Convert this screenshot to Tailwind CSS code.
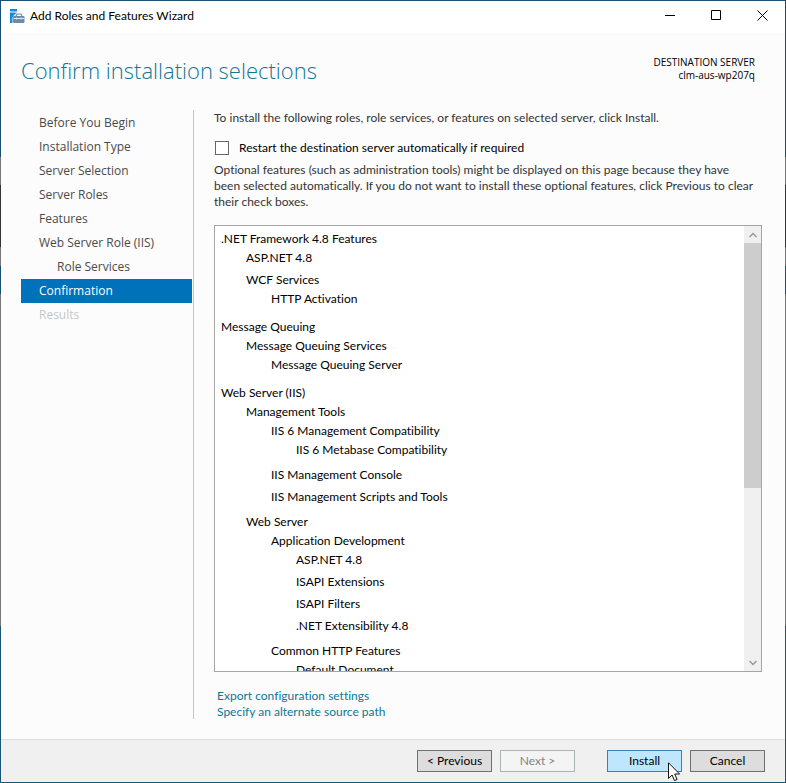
<!DOCTYPE html>
<html lang="en">
<head>
<meta charset="utf-8">
<meta name="viewport" content="width=device-width, initial-scale=1">
<title>Add Roles and Features Wizard</title>
<script src="https://cdn.jsdelivr.net/npm/@tailwindcss/browser@4"></script>
</head>
<body class="h-screen bg-[linear-gradient(#1b4f72_20%,#777_20%_23.6%,#333_23.6%_31.5%,#777_31.5%_34%,#1b4f72_34%_37.6%,#777_37.6%_80%,#1b5672_80%)] p-px font-['Lato','Open_Sans',sans-serif] text-[12px] leading-4 text-black [font-variant-ligatures:none]">
<div class="flex h-full flex-col bg-[#fcfcfc]">
  <header class="flex h-8 shrink-0 items-center bg-white pl-2">
    <svg class="mr-[3px] size-[18px]" viewBox="0 0 18 18" aria-hidden="true">
      <path d="M1 1h7v2.500H1zM1 4.500h7L5 7 3.500 9.500V15H1z" fill="#1e88d8"/>
      <path d="M7 8l1-2h4l1 2" fill="none" stroke="#6f8ba3" stroke-width="1.2"/>
      <rect x="4" y="8" width="11.500" height="7" rx="1" fill="#6f8ba3"/>
      <path d="M4.500 10.500h10.500" stroke="#dfe8f0" stroke-width="1"/>
      <path d="M7.500 9.500v2M12 9.500v2" stroke="#dfe8f0" stroke-width="1"/>
    </svg>
    <span class="grow pb-[2px]">Add Roles and Features Wizard</span>
    <button class="grid h-8 w-[46px] place-items-center pb-1" aria-label="Minimize"><svg class="size-[11px]" viewBox="0 0 11 11"><path d="M0 5.500h10" stroke="#000"/></svg></button>
    <button class="grid h-8 w-[46px] place-items-center pb-1" aria-label="Maximize"><svg class="size-[11px]" viewBox="0 0 11 11"><path d="M.5.5h9v9h-9z" fill="none" stroke="#000"/></svg></button>
    <button class="grid h-8 w-[46px] place-items-center pb-1" aria-label="Close"><svg class="size-[11px]" viewBox="0 0 11 11"><path d="M.5.5l10 10M10.500.5l-10 10" stroke="#000"/></svg></button>
  </header>
  <div class="flex h-[77px] shrink-0 justify-between pr-[30px] pl-5 font-['Open_Sans','Noto_Sans',sans-serif]">
    <h1 class="pt-[19px] text-[22px] leading-9 font-light text-[#117695]">Confirm installation selections</h1>
    <div class="pt-[23px] text-right text-[10px] leading-[13px]"><div>DESTINATION SERVER</div><div>clm-aus-wp207q</div></div>
  </div>
  <div class="flex min-h-0 grow pr-[23px] pb-5 pl-5">
    <nav class="flex w-[173px] shrink-0 flex-col border-r border-[#c5c5c5] pt-px pr-px font-['Open_Sans','Noto_Sans',sans-serif] leading-6 text-[#4a4a4a]">
      <a class="pl-[18px]" href="#">Before You Begin</a>
      <a class="pl-[18px]" href="#">Installation Type</a>
      <a class="pl-[18px]" href="#">Server Selection</a>
      <a class="pl-[18px]" href="#">Server Roles</a>
      <a class="pl-[18px]" href="#">Features</a>
      <a class="pl-[18px]" href="#">Web Server Role (IIS)</a>
      <a class="pl-9" href="#">Role Services</a>
      <a class="bg-[#0072bc] pl-[18px] text-white" href="#" aria-current="step">Confirmation</a>
      <a class="pl-[18px] text-[#c6c6c6]" aria-disabled="true">Results</a>
    </nav>
    <main class="flex min-w-0 grow flex-col pl-5 text-[#333]">
      <p>To install the following roles, role services, or features on selected server, click Install.</p>
      <label class="mt-[14px] flex items-center text-black"><input type="checkbox" class="mr-[10px] ml-px size-[14px] appearance-none border border-[#666] bg-white">Restart the destination server automatically if required</label>
      <p class="mt-[6px] pr-1">Optional features (such as administration tools) might be displayed on this page because they have been selected automatically. If you do not want to install these optional features, click Previous to clear their check boxes.</p>
      <div class="mt-[15px] flex min-h-0 grow border border-[#a5a5a5] bg-white text-black">
        <ul class="grow overflow-hidden pt-[3px] pl-[6px] leading-[19px] [&_li]:pb-[3px] [&_ul]:pl-[25px]">
          <li>.NET Framework 4.8 Features
            <ul><li>ASP.NET 4.8</li><li>WCF Services<ul><li>HTTP Activation</li></ul></li></ul></li>
          <li>Message Queuing
            <ul><li>Message Queuing Services<ul><li>Message Queuing Server</li></ul></li></ul></li>
          <li>Web Server (IIS)
            <ul>
              <li>Management Tools
                <ul><li>IIS 6 Management Compatibility<ul><li>IIS 6 Metabase Compatibility</li></ul></li><li>IIS Management Console</li><li>IIS Management Scripts and Tools</li></ul></li>
              <li>Web Server
                <ul><li>Application Development<ul><li>ASP.NET 4.8</li><li>ISAPI Extensions</li><li>ISAPI Filters</li><li>.NET Extensibility 4.8</li></ul></li><li>Common HTTP Features<ul><li>Default Document</li></ul></li></ul></li>
            </ul></li>
        </ul>
        <div class="flex w-[17px] shrink-0 flex-col bg-[#f0f0f0]">
          <button class="grid h-[17px] place-items-center" aria-label="Scroll up"><svg class="size-2" viewBox="0 0 8 8"><path d="M.5 6L4 2.500 7.500 6" fill="none" stroke="#999" stroke-width="1.500"/></svg></button>
          <div class="flex grow flex-col"><div class="h-[59.5%] bg-[#cdcdcd]"></div></div>
          <button class="grid h-[17px] place-items-center" aria-label="Scroll down"><svg class="size-2" viewBox="0 0 8 8"><path d="M.5 2L4 5.500 7.500 2" fill="none" stroke="#999" stroke-width="1.500"/></svg></button>
        </div>
      </div>
      <div class="mt-4 -mb-px flex flex-col items-start pl-[3px] text-[#0f7595]"><a href="#">Export configuration settings</a><a href="#">Specify an alternate source path</a></div>
    </main>
  </div>
  <footer class="flex h-[43px] shrink-0 justify-end border-t border-[#dcdcdc] bg-[#f0f0f0] pt-[10px] pr-5">
    <button class="h-[22px] w-[75px] border border-[#707070] bg-[#ddd]">&lt; Previous</button>
    <button class="ml-2 h-[22px] w-[75px] border border-[#adb2b5] bg-[#f4f4f4] text-[#838383]" disabled>Next &gt;</button>
    <button class="relative ml-8 h-[22px] w-[75px] border border-[#3c7fb1] bg-[#bee6fd]">Install
      <svg class="absolute top-[11px] left-[60px] h-[20px] w-[13px]" viewBox="0 0 13 20" aria-hidden="true"><path d="M.5.8v15.600l3.600-3.400 2.400 5.600 2.600-1.100-2.400-5.500h4.900z" fill="#fff" stroke="#111"/></svg>
    </button>
    <button class="ml-2 h-[22px] w-[75px] border border-[#707070] bg-[#ddd]">Cancel</button>
  </footer>
</div>
</body>
</html>
